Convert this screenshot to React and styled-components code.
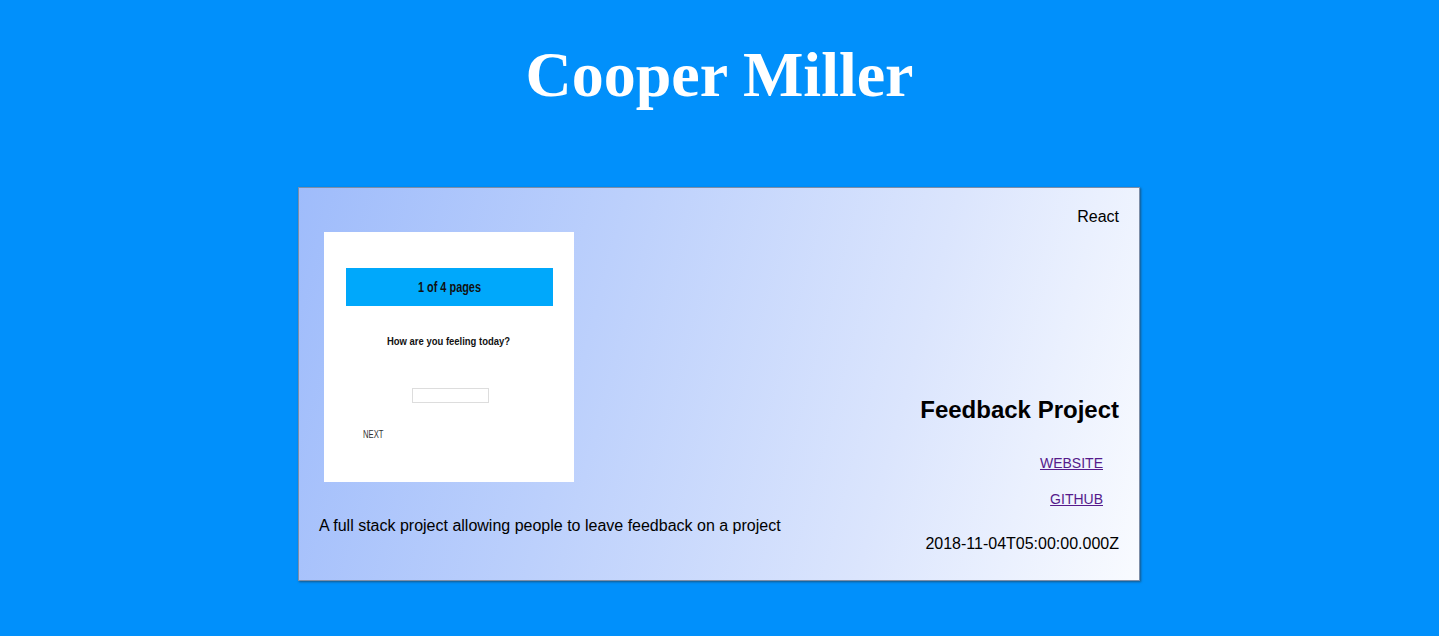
import React from "react";
import styled, { createGlobalStyle } from "styled-components";

const Global = createGlobalStyle`
  html, body { margin: 0; padding: 0; }
  body {
    background: #0190fb;
    font-family: "Liberation Sans", Arial, sans-serif;
    color: #000;
  }
`;

const Page = styled.div`
  min-height: 636px;
  display: flex;
  flex-direction: column;
  align-items: center;
`;

const Name = styled.h1`
  margin: 38px 0 76px;
  font-family: "Liberation Serif", "Times New Roman", serif;
  font-size: 64px;
  font-weight: bold;
  color: #fff;
  line-height: 73px;
`;

const Card = styled.div`
  width: 800px;
  margin-right: 1px;
  display: flex;
  justify-content: space-between;
  padding: 20px 20px 27px 20px;
  border: 1px solid #7d8ea8;
  box-shadow: 1px 1px 2px rgba(40, 40, 40, 0.55);
  background: linear-gradient(105deg, #9fbcfb 0%, #bcd0fc 35%, #dbe5fd 70%, #f9fbff 100%);
`;

const LeftCol = styled.div`
  display: flex;
  flex-direction: column;
`;

const Shot = styled.div`
  width: 250px;
  height: 250px;
  margin: 24px 0 0 5px;
  background: #fff;
  display: flex;
  flex-direction: column;
  align-items: center;
  font-family: "Liberation Sans", Arial, sans-serif;
`;

const ShotBar = styled.div`
  width: 207px;
  height: 38px;
  margin-top: 36px;
  background: #00a8fb;
  display: flex;
  align-items: center;
  justify-content: center;
  color: #111;
`;

const Squeezed = styled.span`
  display: inline-block;
  font-size: ${(p) => p.$size}px;
  font-weight: ${(p) => (p.$bold ? "bold" : "normal")};
  line-height: ${(p) => p.$size + 2}px;
  transform: scaleX(${(p) => p.$scale});
  transform-origin: ${(p) => p.$origin || "center"};
  white-space: nowrap;
`;

const ShotQuestion = styled.div`
  margin-top: 29px;
  color: #111;
  display: flex;
  justify-content: center;
`;

const ShotInput = styled.div`
  margin-top: 40px;
  width: 75px;
  height: 13px;
  border: 1px solid #ddd;
  margin-left: 2px;
`;

const ShotNext = styled.div`
  align-self: flex-start;
  margin: 21px 0 0 39px;
  color: #333;
`;

const Description = styled.p`
  margin: 35px 0 0;
  font-size: 16px;
  line-height: 18px;
`;

const RightCol = styled.div`
  display: flex;
  flex-direction: column;
  align-items: flex-end;
`;

const Tech = styled.div`
  font-size: 16px;
  line-height: 18px;
`;

const Title = styled.h2`
  margin: 170px 0 0;
  font-size: 24px;
  line-height: 28px;
  font-weight: bold;
`;

const Link = styled.a`
  margin: ${(p) => p.$top}px 16px 0 0;
  font-size: 14px;
  line-height: 16px;
  color: #551a8b;
  text-decoration: underline;
`;

const DateText = styled.div`
  margin-top: 28px;
  font-size: 16px;
  line-height: 18px;
`;

export default function App() {
  return (
    <>
      <Global />
      <Page>
        <Name>Cooper Miller</Name>
        <Card>
          <LeftCol>
            <Shot>
              <ShotBar>
                <Squeezed $size={14} $bold $scale={0.78}>1 of 4 pages</Squeezed>
              </ShotBar>
              <ShotQuestion>
                <Squeezed $size={11} $bold $scale={0.86}>How are you feeling today?</Squeezed>
              </ShotQuestion>
              <ShotInput />
              <ShotNext>
                <Squeezed $size={11} $scale={0.7} $origin="left">NEXT</Squeezed>
              </ShotNext>
            </Shot>
            <Description>
              A full stack project allowing people to leave feedback on a project
            </Description>
          </LeftCol>
          <RightCol>
            <Tech>React</Tech>
            <Title>Feedback Project</Title>
            <Link href="#" $top={31}>WEBSITE</Link>
            <Link href="#" $top={20}>GITHUB</Link>
            <DateText>2018-11-04T05:00:00.000Z</DateText>
          </RightCol>
        </Card>
      </Page>
    </>
  );
}
